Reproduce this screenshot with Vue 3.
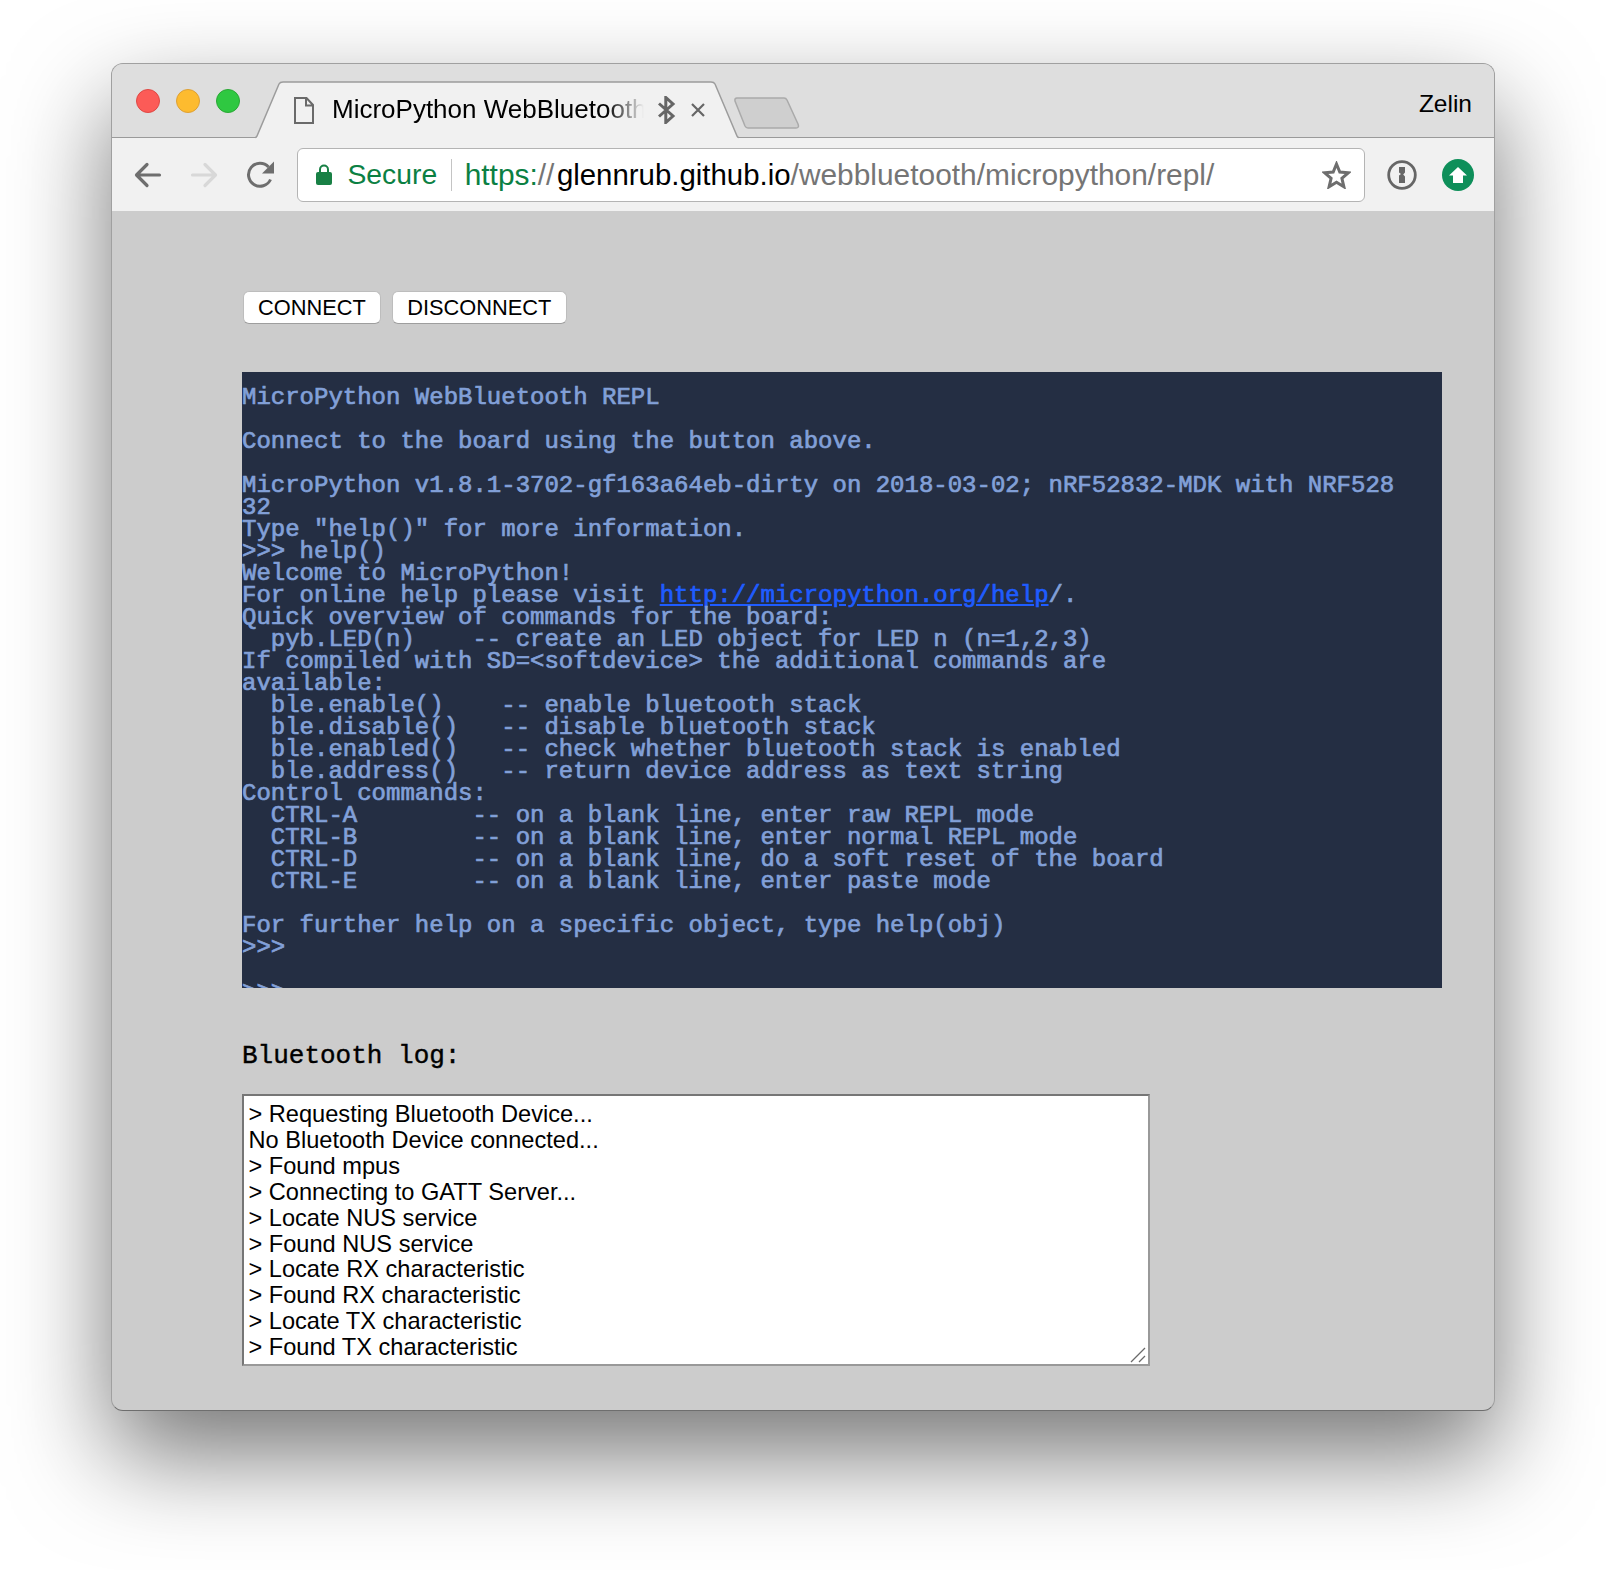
<script setup>
const logLines = [
  '> Requesting Bluetooth Device...',
  'No Bluetooth Device connected...',
  '> Found mpus',
  '> Connecting to GATT Server...',
  '> Locate NUS service',
  '> Found NUS service',
  '> Locate RX characteristic',
  '> Found RX characteristic',
  '> Locate TX characteristic',
  '> Found TX characteristic'
]
</script>

<template>
  <div class="window">
    <header class="tabstrip">
      <div class="lights">
        <span class="light red"></span>
        <span class="light yellow"></span>
        <span class="light green"></span>
      </div>
      <div class="tab">
        <svg class="tab-shape" width="484" height="58" viewBox="0 0 484 58">
          <path d="M0 58 V56.500 Q1.500 56.500 2 55 L24 3 Q25 1 28 1 H456 Q459 1 460 3 L482 55 Q482.500 56.500 484 56.500 V58 Z" fill="#f1f1f1" />
          <path d="M0 56.500 Q1.500 56.500 2 55 L24 3 Q25 1 28 1 H456 Q459 1 460 3 L482 55 Q482.500 56.500 484 56.500" fill="none" stroke="#9c9c9c" stroke-width="1.500" />
        </svg>
        <svg class="file-icon" width="20" height="27" viewBox="0 0 20 27">
          <path d="M1 1 H12.500 L19 8 V26 H1 Z M12 1 V8.500 H19" fill="none" stroke="#6a6a6a" stroke-width="2" />
        </svg>
        <span class="tab-title">MicroPython WebBluetooth REPL</span>
        <svg class="bt-icon" width="19" height="28" viewBox="0 0 19 28">
          <path d="M2 7.500 L16 20 L8.800 26.500 V1.500 L16 8 L2 20.500" fill="none" stroke="#666" stroke-width="3" />
        </svg>
        <svg class="close-icon" width="14" height="14" viewBox="0 0 14 14">
          <path d="M1 1 L13 13 M13 1 L1 13" stroke="#666" stroke-width="2.200" />
        </svg>
      </div>
      <svg class="new-tab" width="66" height="32" viewBox="0 0 66 32">
        <path d="M3 1 H50 Q52 1 53 3 L64 27 Q65.500 31 62 31 H14 Q12 31 11 29 L1 4 Q0.500 1 3 1 Z" fill="#cfcfcf" stroke="#aaa" stroke-width="1.500" />
      </svg>
      <span class="profile">Zelin</span>
    </header>

    <nav class="toolbar">
      <svg class="nav-icon" width="28" height="26" viewBox="0 0 28 26">
        <path d="M25.500 13 H3 M13 2.500 L2.500 13 L13 23.500" fill="none" stroke="#6e6e6e" stroke-width="3.200" stroke-linecap="round" stroke-linejoin="round" />
      </svg>
      <svg class="nav-icon" width="28" height="26" viewBox="0 0 28 26">
        <path d="M2.500 13 H25 M15 2.500 L25.500 13 L15 23.500" fill="none" stroke="#d8d8d8" stroke-width="3.200" stroke-linecap="round" stroke-linejoin="round" />
      </svg>
      <svg class="nav-icon" width="29" height="28" viewBox="0 0 29 28">
        <path d="M24.500 18.500 A11.500 11.500 0 1 1 22.500 6" fill="none" stroke="#6e6e6e" stroke-width="3" />
        <path d="M28 0.500 V12.500 H16 Z" fill="#6e6e6e" />
      </svg>
      <div class="omnibox">
        <svg class="lock" width="16" height="21" viewBox="0 0 16 21">
          <path d="M4 9 V5.500 A4 4 0 0 1 12 5.500 V9" fill="none" stroke="#188045" stroke-width="2" />
          <rect x="0" y="8" width="16" height="13" rx="2" fill="#188045" />
        </svg>
        <span class="secure">Secure</span>
        <span class="sep"></span>
        <span class="url"><span class="scheme">https:</span><span class="slashes">//</span><span class="host">glennrub.github.io</span><span class="path">/webbluetooth/micropython/repl/</span></span>
        <svg class="star" width="29" height="28" viewBox="0 0 29 28">
          <path d="M14.500 3 L17.800 11 L26.500 11.700 L19.900 17.300 L21.900 25.800 L14.500 21.300 L7.100 25.800 L9.100 17.300 L2.500 11.700 L11.200 11 Z" fill="none" stroke="#6e6e6e" stroke-width="3" stroke-linejoin="miter" />
        </svg>
      </div>
      <svg class="ext-onepass" width="30" height="30" viewBox="0 0 30 30">
        <circle cx="15" cy="15" r="13.300" fill="none" stroke="#666" stroke-width="2.800" />
        <path d="M12 7 H18 V12.500 L16.200 14.500 L18 16.500 V23 H12 V15.500 L14 14 L12 12.500 Z" fill="#666" />
      </svg>
      <svg class="ext-update" width="32" height="32" viewBox="0 0 32 32">
        <circle cx="16" cy="16" r="16" fill="#0e8f5a" />
        <path d="M16 8 L25 16.500 H21 V24 H11 V16.500 H7 Z" fill="#fff" />
      </svg>
    </nav>

    <main class="content">
      <div class="actions">
        <button class="btn" type="button">CONNECT</button>
        <button class="btn" type="button">DISCONNECT</button>
      </div>

      <div class="terminal"><pre class="term-text">MicroPython WebBluetooth REPL

Connect to the board using the button above.

MicroPython v1.8.1-3702-gf163a64eb-dirty on 2018-03-02; nRF52832-MDK with NRF528
32
Type "help()" for more information.
&gt;&gt;&gt; help()
Welcome to MicroPython!
For online help please visit <a class="term-link">http://micropython.org/help</a>/.
Quick overview of commands for the board:
  pyb.LED(n)    -- create an LED object for LED n (n=1,2,3)
If compiled with SD=&lt;softdevice&gt; the additional commands are
available:
  ble.enable()    -- enable bluetooth stack
  ble.disable()   -- disable bluetooth stack
  ble.enabled()   -- check whether bluetooth stack is enabled
  ble.address()   -- return device address as text string
Control commands:
  CTRL-A        -- on a blank line, enter raw REPL mode
  CTRL-B        -- on a blank line, enter normal REPL mode
  CTRL-D        -- on a blank line, do a soft reset of the board
  CTRL-E        -- on a blank line, enter paste mode

For further help on a specific object, type help(obj)
&gt;&gt;&gt;

&gt;&gt;&gt;</pre></div>

      <h2 class="log-title">Bluetooth log:</h2>

      <div class="log">
        <div v-for="line in logLines" :key="line" class="log-line">{{ line }}</div>
        <svg class="grip" width="16" height="16" viewBox="0 0 16 16">
          <path d="M1 15 L15 1 M9 15 L15 9" stroke="#6a6a6a" stroke-width="1.300" />
        </svg>
      </div>
    </main>
  </div>
</template>

<style>
html, body {
  background: #fff;
  min-height: 1570px;
  overflow: hidden;
}
</style>

<style scoped>
.window {
  box-sizing: border-box;
  width: 1384px;
  height: 1348px;
  margin: 63px 0 0 111px;
  border: 1px solid #a0a0a0;
  border-bottom-color: #6e6e6e;
  border-radius: 12px;
  background: #ccc;
  box-shadow: 0 44px 100px rgba(0, 0, 0, 0.54);
  font-family: "Liberation Sans", Arial, sans-serif;
}
.tabstrip {
  box-sizing: border-box;
  height: 74px;
  display: flex;
  align-items: flex-start;
  padding: 17px 22px 0 24px;
  background: #dedede;
  border-bottom: 1px solid #9a9a9a;
  border-radius: 11px 11px 0 0;
}
.lights {
  display: flex;
  gap: 16px;
  margin-top: 8px;
}
.light {
  box-sizing: border-box;
  width: 24px;
  height: 24px;
  border-radius: 50%;
}
.red { background: #fc5b57; border: 1px solid #df4844; }
.yellow { background: #fdbb2f; border: 1px solid #dea034; }
.green { background: #2fc841; border: 1px solid #2aa835; }
.tab {
  position: relative;
  box-sizing: border-box;
  width: 484px;
  height: 58px;
  margin-left: 15px;
  display: flex;
  align-items: flex-start;
  flex: none;
}
.tab-shape {
  position: absolute;
  left: 0;
  top: 0;
}
.file-icon {
  position: relative;
  margin: 16px 0 0 38.500px;
  flex: none;
}
.tab-title {
  position: relative;
  width: 312px;
  margin: 14px 0 0 18.500px;
  flex: none;
  overflow: hidden;
  white-space: nowrap;
  font-size: 26px;
  line-height: 29px;
  color: #000;
  -webkit-mask-image: linear-gradient(to right, #000 88%, transparent 100%);
  mask-image: linear-gradient(to right, #000 88%, transparent 100%);
}
.bt-icon {
  position: relative;
  margin: 15px 0 0 12.500px;
  flex: none;
}
.close-icon {
  position: relative;
  margin: 22px 0 0 15px;
  flex: none;
}
.new-tab {
  margin: 16px 0 0 -5px;
  flex: none;
}
.profile {
  margin: 9px 0 0 auto;
  font-size: 24.500px;
  line-height: 28px;
  color: #000;
}
.toolbar {
  box-sizing: border-box;
  height: 73px;
  display: flex;
  align-items: center;
  padding: 0 20px 0 22px;
  background: #f1f1f1;
}
.nav-icon { flex: none; margin-right: 28px; }
.nav-icon:nth-child(3) { margin-right: 21.500px; }
.omnibox {
  box-sizing: border-box;
  width: 1068px;
  height: 54px;
  display: flex;
  align-items: center;
  padding: 0 13px 0 18px;
  background: #fff;
  border: 1px solid #b4b4b4;
  border-radius: 6px;
  font-size: 28.300px;
  flex: none;
}
.lock { flex: none; }
.secure { margin-left: 16px; color: #0b8043; }
.sep {
  width: 1px;
  height: 32px;
  margin: 0 12.500px 0 14px;
  background: #c4c4c4;
}
.url { white-space: nowrap; font-size: 29.900px; }
.scheme { color: #0b8043; }
.slashes { color: #757575; padding-right: 2.500px; }
.host { color: #000; font-size: 29.400px; }
.path { color: #757575; }
.star { margin-left: auto; flex: none; }
.ext-onepass { margin-left: 22px; flex: none; }
.ext-update { margin-left: 25.500px; flex: none; }
.content {
  padding: 80px 0 0 130px;
}
.actions {
  display: flex;
  gap: 11px;
  padding-left: 1px;
}
.btn {
  box-sizing: border-box;
  height: 33px;
  padding: 0 14.400px 0 14px;
  background: #fff;
  border: 1px solid #bdbdbd;
  border-bottom-color: #9e9e9e;
  border-radius: 6px;
  font-family: "Liberation Sans", Arial, sans-serif;
  font-size: 21.800px;
  line-height: 31px;
  color: #000;
}
.terminal {
  width: 1200px;
  height: 616px;
  box-sizing: border-box;
  margin-top: 48px;
  padding-top: 15px;
  background: #242e43;
  overflow: hidden;
}
.term-text {
  margin: 0;
  font-family: "Liberation Mono", "Courier New", monospace;
  font-weight: 400;
  -webkit-text-stroke: 0.7px currentColor;
  font-size: 24px;
  line-height: 22px;
  color: #82a0d8;
}
.term-link {
  color: #1f5cff;
  text-decoration: underline;
}
.log-title {
  margin: 52.500px 0 0;
  font-family: "Liberation Mono", "Courier New", monospace;
  font-weight: 400;
  -webkit-text-stroke: 0.4px currentColor;
  font-size: 26px;
  line-height: 30px;
  color: #000;
}
.log {
  position: relative;
  box-sizing: border-box;
  width: 908px;
  height: 272px;
  margin-top: 23px;
  padding: 6.500px 4.500px 0;
  background: #fff;
  border: 2px solid #999;
  border-top-color: #767676;
  border-left-color: #767676;
  overflow: hidden;
  font-size: 23.600px;
  line-height: 25.900px;
  color: #000;
  white-space: pre;
}
.grip {
  position: absolute;
  right: 2px;
  bottom: 1px;
}
</style>
